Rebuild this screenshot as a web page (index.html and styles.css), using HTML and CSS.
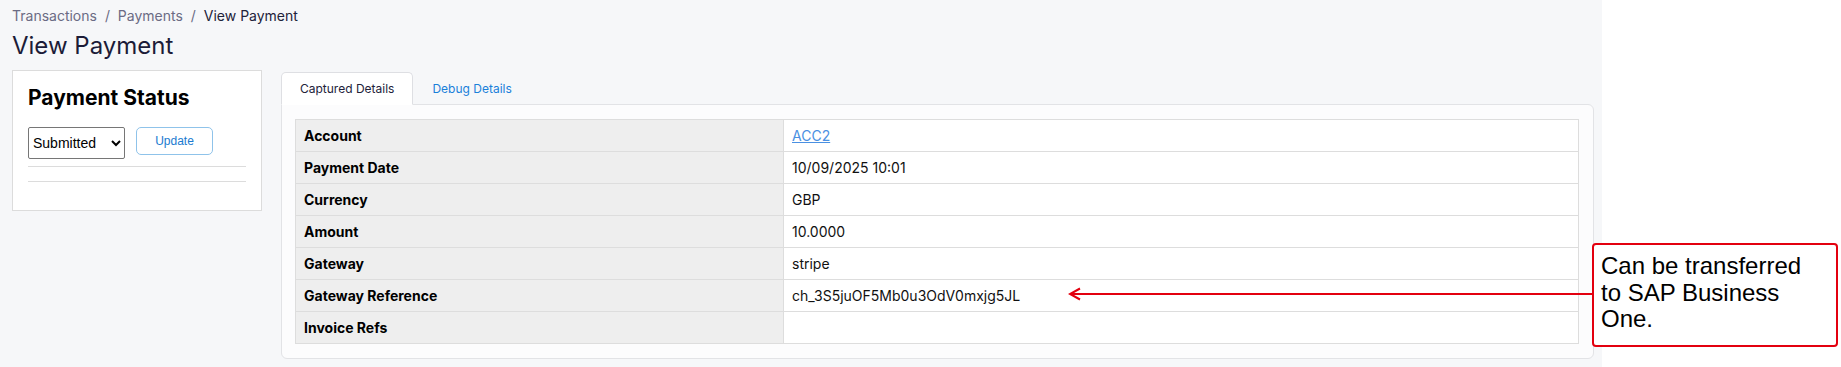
FILE: index.html
```html
<!DOCTYPE html>
<html lang="en">
<head>
    <meta charset="UTF-8">
    <meta name="viewport" content="width=device-width, initial-scale=1.0">
    <title>View Payment</title>
    <link rel="stylesheet" href="styles.css">
</head>
<body>
    <div class="page">
        <nav class="breadcrumb">
            <a href="#">Transactions</a>
            <span class="sep">/</span>
            <a href="#">Payments</a>
            <span class="sep">/</span>
            <span class="current">View Payment</span>
        </nav>
        <h1 class="page-title">View Payment</h1>

        <div class="layout">
            <aside class="card status-card">
                <h2>Payment Status</h2>
                <form class="status-form" onsubmit="return false">
                    <select class="status-select">
                        <option>Submitted</option>
                        <option>Pending</option>
                        <option>Failed</option>
                    </select>
                    <button type="submit" class="btn-outline">Update</button>
                </form>
                <div class="status-history"></div>
            </aside>

            <section class="details">
                <ul class="tabs">
                    <li class="tab active">Captured Details</li>
                    <li class="tab">Debug Details</li>
                </ul>
                <div class="tab-panel">
                    <table class="detail-table">
                        <tr><th>Account</th><td><a href="#">ACC2</a></td></tr>
                        <tr><th>Payment Date</th><td>10/09/2025 10:01</td></tr>
                        <tr><th>Currency</th><td>GBP</td></tr>
                        <tr><th>Amount</th><td>10.0000</td></tr>
                        <tr><th>Gateway</th><td>stripe</td></tr>
                        <tr><th>Gateway Reference</th><td>ch_3S5juOF5Mb0u3OdV0mxjg5JL</td></tr>
                        <tr><th>Invoice Refs</th><td></td></tr>
                    </table>
                </div>
            </section>
        </div>
    </div>

    <!-- annotation -->
    <svg class="callout-arrow" width="526" height="16" viewBox="0 0 526 16">
        <path d="M2 8 L526 8 M12 2.5 L2 8 L12 13.5" fill="none" stroke="#e3000f" stroke-width="2"/>
    </svg>
    <div class="callout">Can be transferred to SAP Business One.</div>
</body>
</html>
```

FILE: styles.css
```css
* {
    box-sizing: border-box;
}
body {
    margin: 0;
    background: #fff;
    font-family: Inter, "Noto Sans", sans-serif;
    color: #111;
}
.page {
    width: 1602px;
    min-height: 367px;
    background-color: #f6f7f9;
    padding: 6px 8px 0 12px;
}
.breadcrumb {
    font-size: 14px;
    line-height: 20px;
    color: #22223a;
}
.breadcrumb a {
    color: #6b6b84;
    text-decoration: none;
}
.breadcrumb .sep {
    color: #6b6b84;
    padding: 0 4px;
}
.page-title {
    margin: 4px 0 0 0;
    font-size: 24px;
    line-height: 32px;
    font-weight: 400;
    color: #1c1c38;
}
.layout {
    display: flex;
    align-items: flex-start;
    gap: 19px;
    margin-top: 8px;
}
.card {
    background: #fff;
    border: 1px solid #dcdcdc;
}
.status-card {
    width: 250px;
    padding: 15px;
}
.status-card h2 {
    margin: 0;
    font-size: 21px;
    line-height: 24px;
    font-weight: 700;
    color: #000;
}
.status-form {
    display: flex;
    align-items: flex-start;
    gap: 11px;
    margin-top: 17px;
}
.status-select {
    width: 97px;
    height: 32px;
    font-family: "Liberation Sans", Arial, sans-serif;
    font-size: 14px;
    color: #000;
    border: 1px solid #767676;
    border-radius: 2px;
    background: #fff;
}
.btn-outline {
    width: 77px;
    height: 28px;
    background: #fff;
    color: #1a7bd0;
    border: 1px solid #8fc3ea;
    border-radius: 5px;
    font-family: "Liberation Sans", Arial, sans-serif;
    font-size: 12px;
    cursor: pointer;
}
.status-history {
    margin-top: 7px;
    height: 16px;
    border-top: 1px solid #dcdcdc;
    border-bottom: 1px solid #dcdcdc;
    margin-bottom: 13px;
}
.details {
    flex: 1;
    margin-top: 2px;
}
.tabs {
    display: flex;
    list-style: none;
    margin: 0 0 -1px 0;
    padding: 0;
    position: relative;
}
.tab {
    padding: 9px 18px 8px;
    font-size: 12px;
    line-height: 14px;
    color: #1a80d9;
    border: 1px solid transparent;
    border-radius: 5px 5px 0 0;
}
.tab.active {
    color: #22223a;
    background: #fff;
    border-color: #dedfe3 #dedfe3 #fff;
}
.tab-panel {
    background: #fcfcfd;
    border: 1px solid #e2e3e6;
    border-radius: 0 6px 6px 6px;
    padding: 14px 14px 14px 13px;
}
.detail-table {
    width: 100%;
    border-collapse: collapse;
    font-size: 14px;
    line-height: 20px;
}
.detail-table th,
.detail-table td {
    border: 1px solid #dddddd;
    padding: 6px 8px 5px;
    text-align: left;
    height: 32px;
}
.detail-table th {
    width: 488px;
    background: #eeeeee;
    font-weight: 700;
    color: #000;
}
.detail-table td {
    background: #fff;
    color: #111;
}
.detail-table a {
    color: #4a90e2;
}
.callout {
    position: absolute;
    left: 1592px;
    top: 243px;
    width: 246px;
    height: 104px;
    padding: 8px 16px 0 7px;
    border: 2px solid #e3000f;
    border-radius: 4px;
    background: #fff;
    font-family: "Liberation Sans", Arial, sans-serif;
    font-size: 24px;
    line-height: 26.5px;
    color: #000;
}
.callout-arrow {
    position: absolute;
    left: 1068px;
    top: 286px;
}
```
